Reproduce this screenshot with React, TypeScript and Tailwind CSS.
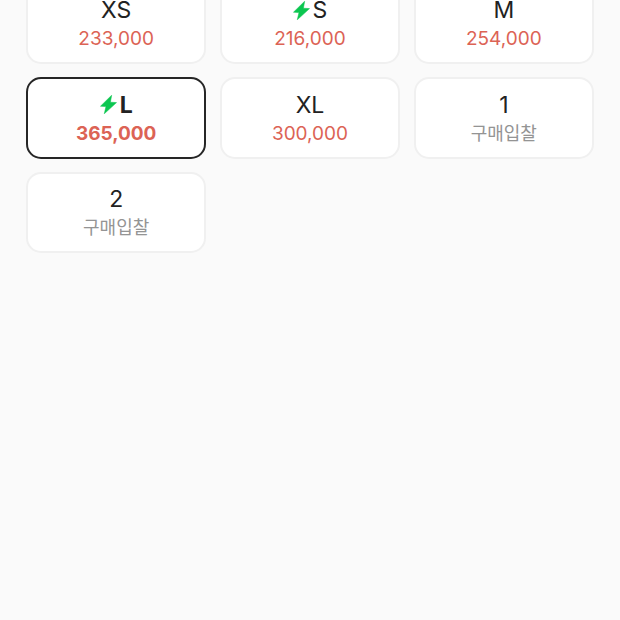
import React from 'react';

const sizes = [
  { label: 'XS', price: '233,000' },
  { label: 'S', price: '216,000', fast: true },
  { label: 'M', price: '254,000' },
  { label: 'L', price: '365,000', fast: true, selected: true },
  { label: 'XL', price: '300,000' },
  { label: '1' },
  { label: '2' },
];

const Bolt = () => (
  <svg viewBox="0 0 16 18" className="w-[17px] h-[19px] mr-[3px] shrink-0">
    <path d="M11 0.2 L0.4 10.6 L5.6 11 L4 17.8 L15.6 7.2 L9.8 6.8 Z" fill="#0bc650" stroke="#0bc650" strokeWidth="0.5" strokeLinejoin="round" />
  </svg>
);

const App = () => {
  return (
    <div className="w-[620px] h-[620px] overflow-hidden bg-[#fafafa] font-['Inter','Noto_Sans_CJK_KR',sans-serif]">
      <div className="grid grid-cols-3 gap-x-[13.5px] gap-y-[13px] px-[26px] -mt-[17.5px]">
        {sizes.map(size => (
          <button
            key={size.label}
            className={`h-[81.5px] pt-[2px] bg-white rounded-[15px] flex flex-col items-center justify-center border-2 ${
              size.selected ? 'border-[#262626]' : 'border-[#f0f0f0]'
            }`}
          >
            <div
              className={`flex items-center h-[28px] text-[23px] leading-[28px] text-[#222222] ${
                size.selected ? 'font-bold' : 'font-normal'
              }`}
            >
              {size.fast && <Bolt />}
              {size.label}
            </div>
            {size.price ? (
              <div
                className={`h-[27px] mt-[1px] text-[19px] leading-[27px] text-[#dc6355] ${
                  size.selected ? 'font-bold' : 'font-normal'
                }`}
              >
                {size.price}
              </div>
            ) : (
              <div className="h-[27px] mt-[1px] text-[18px] leading-[27px] text-[#949494]">구매입찰</div>
            )}
          </button>
        ))}
      </div>
    </div>
  );
};

export default App;
